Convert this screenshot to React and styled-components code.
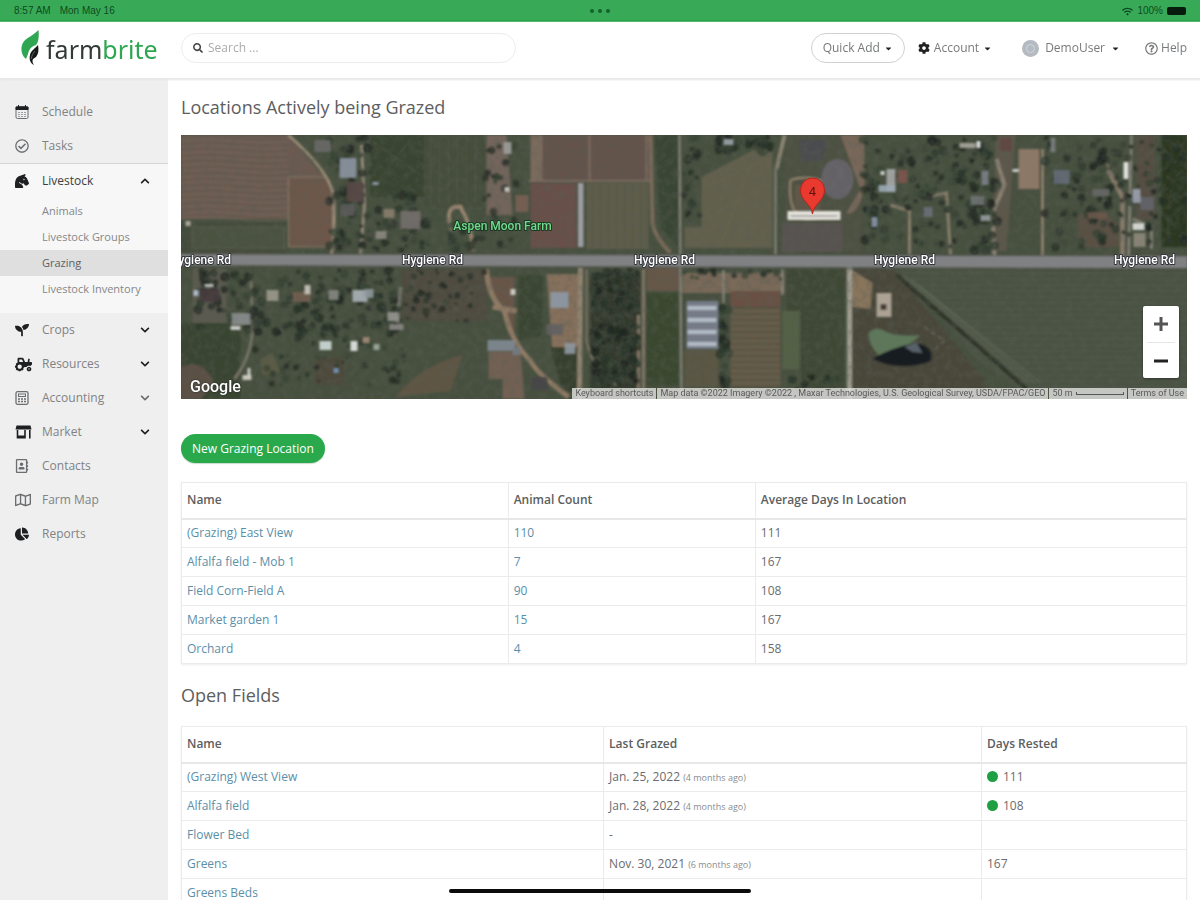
import React from "react";
import styled, { createGlobalStyle, css } from "styled-components";
import {
  FaCaretDown, FaChartPie, FaChevronDown, FaChevronUp, FaCog, FaHorseHead, FaRegAddressBook,
  FaRegCheckCircle, FaRegMap, FaRegQuestionCircle, FaSearch, FaSeedling,
  FaTractor, FaWifi,
} from "react-icons/fa";

const GlobalStyle = createGlobalStyle`
  *, *::before, *::after { box-sizing: border-box; }
  body {
    margin: 0;
    background: #fff;
    color: #6a6c6f;
    font-family: "Open Sans", "Liberation Sans", sans-serif;
    font-size: 12px;
    line-height: 18px;
  }
  button, input { font: inherit; color: inherit; }
  a { text-decoration: none; color: inherit; }
`;

const Page = styled.div`
  display: flex;
  flex-direction: column;
  height: 100vh;
  overflow: hidden;
`;

/* Device status bar */
const StatusBar = styled.div`
  display: grid;
  grid-template-columns: 1fr auto 1fr;
  align-items: center;
  flex: none;
  height: 22px;
  padding: 0 14px;
  background: #38aa57;
  border-bottom: 2px solid #16a03a;
  color: #0d4a20;
  font-family: "Liberation Sans", sans-serif;
  font-size: 10px;
`;
const StatusGroup = styled.div`
  display: flex;
  align-items: center;
  gap: ${(p) => (p.$end ? "4px" : "9px")};
  padding-top: 2px;
  justify-content: ${(p) => (p.$end ? "flex-end" : "flex-start")};
`;
const Multitask = styled.div`
  display: flex;
  gap: 4px;
  padding-top: 2px;
  i { width: 4px; height: 4px; border-radius: 50%; background: #11632b; }
`;
const Battery = styled.span`
  width: 19px;
  height: 8px;
  border-radius: 2px;
  background: #071c0d;
`;

/* Header */
const Header = styled.header`
  display: flex;
  align-items: center;
  flex: none;
  height: 56px;
  padding: 0 13px 4px 21px;
  background: #fff;
  box-shadow: 0 1px 2px 1px #e6e7e8;
  z-index: 1;
`;
const Brand = styled.a`
  display: flex;
  align-items: center;
  gap: 6px;
  width: 160px;
  flex: none;
  font-family: "Noto Sans", "Open Sans", sans-serif;
  font-size: 25px;
  line-height: 34px;
  color: #333a3a;
  span { padding-top: 2px; }
  span span { color: #2fa651; }
  svg { flex: none; }
`;
const SearchBox = styled.label`
  display: flex;
  align-items: center;
  gap: 5px;
  flex: 0 1 335px;
  height: 30px;
  padding: 0 11px;
  border: 1px solid #ececee;
  border-radius: 15px;
  color: #444;
  input {
    flex: 1;
    min-width: 0;
    border: 0;
    padding: 0;
    outline: 0;
    background: none;
  }
  input::placeholder { color: #a9abad; opacity: 1; }
`;
const UserNav = styled.nav`
  display: flex;
  align-items: center;
  margin-left: auto;
  white-space: nowrap;
`;
const MenuButton = styled.button`
  display: flex;
  align-items: center;
  gap: ${(p) => (p.$avatar ? "6px" : "4px")};
  height: 30px;
  padding: 0 ${(p) => (p.$pill ? "11px" : "0")};
  margin-right: ${(p) => p.$after}px;
  border: ${(p) => (p.$pill ? "1px solid #cfd1d3" : "0")};
  border-radius: 15px;
  background: none;
  color: #777a7c;
  svg { color: #222; }
`;
const HelpLink = styled.a`
  display: flex;
  align-items: center;
  gap: 3px;
  color: #777a7c;
`;
const Avatar = styled.span`
  display: grid;
  place-items: center;
  width: 17px;
  height: 17px;
  border-radius: 50%;
  background: #b3bac1;
  &::after {
    content: "";
    width: 9px;
    height: 9px;
    border: 1px solid #d3d8dc;
    border-radius: 50%;
  }
`;

/* Layout */
const Body = styled.div`
  display: flex;
  flex: 1;
  min-height: 0;
`;
const Sidebar = styled.nav`
  flex: none;
  width: 168px;
  padding-top: 17px;
  background: #efefef;
  overflow: hidden;
`;
const NavItem = styled.a`
  display: grid;
  grid-template-columns: 27px 1fr 12px;
  align-items: center;
  height: 34px;
  padding: 0 16px 0 15px;
  color: ${(p) => (p.$open ? "#3c3e40" : "#808284")};
  > svg { color: ${(p) => (p.$soft ? "#6b6d6f" : "#1d1f21")}; }
`;
const OpenGroup = styled.div`
  padding-bottom: 11px;
  background: #f7f7f7;
  border-top: 1px solid #d5d6d7;
`;
const SubItem = styled.a`
  display: block;
  height: 26px;
  padding-left: 42px;
  font-size: 11px;
  line-height: 26px;
  color: ${(p) => (p.$active ? "#5c5e60" : "#858789")};
  background: ${(p) => (p.$active ? "#dfdfdf" : "none")};
`;
const Main = styled.main`
  flex: 1;
  min-width: 0;
  padding: 16px 13px 0;
  overflow-y: auto;
  scrollbar-width: none;
`;
const Title = styled.h2`
  margin: 0 0 ${(p) => p.$gap}px;
  font-size: 18px;
  line-height: 26px;
  font-weight: 400;
  color: #5c5e60;
`;

/* Map */
const MapFrame = styled.section`
  position: relative;
  height: 264px;
  overflow: hidden;
  background: #434a3b;
  > svg { display: block; width: 100%; height: 100%; }
`;
const MapBrand = styled.span`
  position: absolute;
  left: 9px;
  bottom: 2px;
  color: #fff;
  font-family: Roboto, sans-serif;
  font-weight: 500;
  font-size: 16px;
  line-height: 20px;
  text-shadow: 0 0 2px #222;
`;
const ZoomControl = styled.div`
  position: absolute;
  right: 8px;
  bottom: 21px;
  display: flex;
  flex-direction: column;
  width: 36px;
  padding: 0 4px;
  border-radius: 2px;
  background: #fff;
  box-shadow: 0 1px 3px rgba(0, 0, 0, 0.35);
`;
const ZoomButton = styled.button`
  display: grid;
  place-items: center;
  height: 36px;
  padding: 0;
  border: 0;
  background: none;
  color: #555;
  & + & { border-top: 1px solid #e6e6e6; color: #222; }
`;
const MapCredits = styled.div`
  position: absolute;
  right: 0;
  bottom: 0;
  display: flex;
  gap: 1px;
  font-family: Roboto, sans-serif;
  font-size: 9px;
  line-height: 11px;
  color: #5a5a5a;
  white-space: nowrap;
  > * {
    display: flex;
    align-items: center;
    gap: 3px;
    padding: 0 3px;
    background: rgba(225, 225, 222, 0.82);
  }
`;
const ScaleBar = styled.i`
  width: 48px;
  height: 3px;
  border: 1px solid #555;
  border-top: 0;
`;

const PrimaryButton = styled.button`
  display: block;
  height: 29px;
  margin: 35px 0 19px;
  padding: 0 11px;
  border: 0;
  border-radius: 15px;
  background: #2aa84c;
  color: #fff;
  font-weight: 500;
  box-shadow: 0 1px 1px #c9dccd;
`;

/* Data tables */
const cell = css`
  padding: 0 5px;
  border: 1px solid #ebebec;
  text-align: left;
  height: 29px;
`;
const Table = styled.table`
  width: 100%;
  table-layout: fixed;
  border-collapse: collapse;
  margin-bottom: ${(p) => p.$after || 0}px;
  box-shadow: 0 1px 2px #ececec;
  th {
    ${cell}
    height: 36px;
    border-bottom: 2px solid #e6e7e8;
    font-weight: 600;
    color: #5c5e60;
  }
  td { ${cell} }
  a { color: #5a8fa9; }
  small { font-size: 9px; color: #8a8c8e; }
`;
const Column = styled.col`
  width: ${(p) => p.$width};
`;
const Dot = styled.span`
  display: inline-block;
  width: 11px;
  height: 11px;
  margin-right: 5px;
  border-radius: 50%;
  background: #1d9f42;
  vertical-align: -1px;
`;
const HomeIndicator = styled.div`
  position: fixed;
  left: 50%;
  bottom: 7px;
  width: 302px;
  height: 4px;
  border-radius: 2px;
  background: #0b0b0b;
  transform: translateX(-50%);
`;

const LeafLogo = () => (
  <svg width="19" height="36" viewBox="0 0 19 36" aria-hidden="true">
    <path d="M17.500 0C18 5 18 12 15 15C11 16 8 19 7 24L5 29C1 26 -.5 20 1 15C3 8 11 7 17.500 0Z" fill="#2fa651" />
    <path d="M17 15C18 20 17.500 24 15 27L12 29C11 31 11.500 33 13 35C9 33 8 29 9 25C10 20 14 19 17 15Z" fill="#141817" />
    <path d="M10 29Q11 24 14 21" stroke="#7d8482" strokeWidth=".7" fill="none" />
  </svg>
);

/* Sidebar icons */
const CalendarIcon = ({ size }) => (
  <svg width={size} height={size} viewBox="0 0 14 14" fill="none" stroke="currentColor" aria-hidden="true">
    <rect x="1" y="1.500" width="12" height="12" rx="1.500" />
    <path d="M1 2H13V4.500H1Z" fill="#1d1f21" stroke="#1d1f21" />
    <path d="M3.500 0V2M10.500 0V2" stroke="#1d1f21" />
    <path d="M3 7.500H11M3 9.500H11M3 11.500H11" strokeDasharray="2 1" opacity=".6" />
  </svg>
);
const CalculatorIcon = ({ size }) => (
  <svg width={size} height={size} viewBox="0 0 14 14" fill="none" stroke="currentColor" aria-hidden="true">
    <rect x="1" y=".7" width="12" height="12.600" rx="1.500" strokeWidth="1.300" />
    <rect x="3.500" y="3" width="7" height="2.500" />
    <path d="M3 8H11M3 10.500H11" strokeWidth="1.600" strokeDasharray="2 1" />
  </svg>
);
const StallIcon = ({ size }) => (
  <svg width={size + 3} height={size} viewBox="0 0 17 14" aria-hidden="true">
    <path d="M1.500 .5H15.500L16.500 4.500H.5Z" fill="currentColor" />
    <path d="M2.500 5V12.800H10V5M14.800 5V13.500" fill="none" stroke="currentColor" strokeWidth="1.600" />
    <path d="M2.500 11.500H10" stroke="currentColor" strokeWidth="2" />
  </svg>
);

/* Deterministic scatter so that the tree cover is the same on each render */
function scatter(seed, count, x, y, w, h, min, max) {
  let s = seed;
  const next = () => {
    s = (s * 16807) % 2147483647;
    return s / 2147483647;
  };
  next();
  return Array.from({ length: count }, () => ({
    x: x + next() * w,
    y: y + next() * h,
    r: min + next() * (max - min),
    tone: Math.floor(next() * 4),
  }));
}
const TREE_TONES = ["#232e24", "#2b3a2b", "#344432", "#1f2722"];
const TREES = [
  ...scatter(11, 55, 148, 2, 42, 114, 2, 5),
  ...scatter(17, 36, 190, 60, 60, 56, 2, 5),
  ...scatter(23, 14, 270, 88, 40, 28, 2, 5),
  ...scatter(29, 22, 304, 2, 32, 112, 2, 4),
  ...scatter(31, 18, 502, 2, 18, 88, 2, 5),
  ...scatter(37, 34, 530, 0, 60, 16, 2, 6),
  ...scatter(41, 150, 15, 134, 205, 64, 2, 5),
  ...scatter(43, 46, 220, 134, 86, 54, 1, 4),
  ...scatter(47, 60, 74, 190, 150, 62, 1, 4),
  ...scatter(53, 60, 408, 134, 50, 66, 2, 4),
  ...scatter(59, 75, 408, 192, 50, 58, 2, 5),
  ...scatter(61, 30, 538, 168, 10, 84, 3, 5),
  ...scatter(67, 22, 502, 132, 100, 12, 2, 4),
  ...scatter(71, 120, 682, 0, 134, 112, 2, 5),
  ...scatter(73, 36, 790, 0, 28, 116, 2, 5),
  ...scatter(79, 75, 864, 0, 78, 114, 2, 5),
  ...scatter(83, 28, 943, 0, 30, 110, 2, 4),
  ...scatter(89, 30, 972, 0, 35, 108, 2, 4),
  ...scatter(97, 12, 610, 240, 60, 16, 2, 4),
];
const ROOFS = [
  [159, 23, 17, 20, "#8b95a4"], [166, 47, 17, 20, "#5b4946"], [134, 5, 16, 12, "#6a6a69"], [160, 69, 14, 12, "#5d5b5c"],
  [220, 76, 20, 18, "#75706d"], [203, 74, 11, 9, "#8a7d69"], [195, 96, 11, 8, "#8d887e"], [192, 47, 6, 3, "#93a4bd"],
  [19, 154, 20, 13, "#493b3e"], [13, 155, 5, 6, "#b8c6dd"], [24, 149, 9, 3, "#c9cdca"], [51, 178, 19, 12, "#8a8d8d"],
  [50, 191, 10, 4, "#dadada"], [86, 155, 12, 11, "#9b9989"], [112, 157, 18, 10, "#77604d"], [124, 150, 6, 9, "#cdc7bb"],
  [172, 155, 15, 12, "#a8b3b8"], [184, 154, 9, 9, "#8d989f"], [148, 155, 10, 10, "#85877f"], [207, 177, 11, 9, "#95958f"],
  [209, 189, 14, 6, "#8b8784"], [139, 206, 12, 9, "#cedbd8"], [170, 206, 7, 10, "#e3e8e5"], [193, 209, 6, 6, "#9cab9e"],
  [182, 202, 7, 6, "#a58b71"], [62, 240, 9, 5, "#d6d4c9"], [67, 233, 3, 8, "#dcdad0"], [153, 233, 5, 5, "#7196c5"],
  [307, 205, 28, 11, "#7f8996"], [330, 154, 5, 6, "#d8d8d5"], [370, 157, 18, 16, "#8b9aa8"], [366, 189, 16, 11, "#5f5f62"],
  [384, 208, 11, 11, "#8e98a2"], [332, 212, 8, 8, "#747b83"], [351, 242, 16, 13, "#494549"], [335, 60, 13, 17, "#7b5e50"],
  [324, 52, 5, 5, "#d2d0ca"], [323, 7, 8, 12, "#9c9f9b"], [706, 34, 9, 23, "#a8aaa8"], [717, 35, 10, 13, "#82534a"],
  [698, 50, 17, 7, "#9aaab8"], [691, 82, 6, 10, "#8593ab"], [743, 72, 9, 10, "#6b707c"], [779, 8, 16, 5, "#a8a59a"],
  [796, 6, 4, 7, "#f0f0ed"], [801, 36, 7, 14, "#7b8189"], [820, 3, 11, 13, "#644640"], [790, 61, 14, 9, "#6f7374"],
  [800, 80, 10, 6, "#969a9c"], [832, 34, 6, 3, "#d9dfdb"], [870, 3, 5, 14, "#7e8383"], [873, 35, 16, 14, "#646c79"],
  [912, 54, 17, 7, "#666866"], [943, 27, 5, 17, "#efefec"], [952, 54, 8, 14, "#9aa2b4"], [960, 62, 13, 13, "#62656d"],
  [952, 88, 12, 7, "#e0e1df"], [953, 98, 12, 14, "#8f8a79"], [907, 77, 20, 7, "#6b5848"], [5, 86, 5, 5, "#b8b2a4"],
  [543, 4, 10, 6, "#9aa4a8"], [700, 36, 4, 4, "#dfe3e0"],
];
const ROAD_LABELS = [20, 252, 484, 724, 964];

const Lines = ({ items, color, width = 1, opacity = 1 }) => (
  <g stroke={color} strokeWidth={width} opacity={opacity} fill="none">
    {items.map((d) => <path key={d} d={d} />)}
  </g>
);
const range = (n, f) => Array.from({ length: n }, (_, i) => f(i));

function SatelliteMap() {
  return (
    <svg viewBox="0 0 1007 264" preserveAspectRatio="xMidYMid slice" role="img" aria-label="Satellite map of Hygiene Rd">
      <defs>
        <filter id="ground" x="0" y="0" width="100%" height="100%">
          <feTurbulence type="fractalNoise" baseFrequency=".14" numOctaves="4" seed="5" result="noise" />
          <feColorMatrix in="noise" type="matrix" values="0 0 0 0 .1  0 0 0 0 .11  0 0 0 0 .09  0 0 0 1.600 -.62" />
        </filter>
        <filter id="soft" x="-2%" y="-2%" width="104%" height="104%">
          <feGaussianBlur stdDeviation=".8" />
          <feColorMatrix type="saturate" values=".85" />
        </filter>
        <clipPath id="crop-field"><path d="M718 134L1007 137V264H852L794 222Z" /></clipPath>
      </defs>
      <rect width="1007" height="264" fill="#47503f" />
      <g filter="url(#soft)">
        {/* north side fields */}
        <path d="M0 0H108L146 45V84H0Z" fill="#6d5a4e" />
        <Lines items={range(14, (i) => `M0 ${6 + i * 6}q27 -3 54 0t54 1`)} color="#85705f" opacity=".55" />
        <path d="M0 88H105V117H0Z" fill="#434c39" />
        <path d="M12 92H104V113H12Z" fill="#48533c" stroke="#5c604b" />
        <path d="M108 42H146L152 56V112H108Z" fill="#6f5746" stroke="#8d7a65" />
        <path d="M190 0H244V62H190Z" fill="#38442f" />
        <path d="M192 6L240 40M232 2L200 42" stroke="#4d573f" />
        <path d="M244 0H304V72H244Z" fill="#444d39" />
        <Lines items={range(6, (i) => `M${250 + i * 9} 2V68`)} color="#566049" opacity=".6" />
        <path d="M306 0H326L332 80H306Z" fill="#74655a" />
        <path d="M350 0H470V46H350Z" fill="#65524a" />
        <path d="M350 0H362V46H350Z" fill="#7c6a5a" />
        <Lines items={["M409 0V45", "M348 46H470", "M466 0V46"]} color="#806c5d" width="2" />
        <path d="M350 48H396V113H350Z" fill="#6b5046" />
        <path d="M406 48H468V114H406Z" fill="#5e5d47" />
        <Lines items={range(7, (i) => `M${412 + i * 8} 50V112`)} color="#4c573c" opacity=".6" />
        <path d="M474 0H498V112L480 92Z" fill="#394631" />
        <path d="M470 0L472 88Q474 102 490 118" stroke="#7e6b55" strokeWidth="4" fill="none" />
        <path d="M521 42L575 14H592V113H504V92H521Z" fill="#636049" />
        <path d="M524 52L588 24M524 84L588 50M540 110L570 30" stroke="#70694f" opacity=".7" />
        <path d="M604 0H682V116H604Z" fill="#4d5141" />
        <path d="M610 45Q606 92 640 82M610 45Q626 40 642 46" stroke="#998669" strokeWidth="2" fill="none" />
        <path d="M614 50H640V76H614Z" fill="#625744" />
        <ellipse cx="657" cy="44" rx="16" ry="20" fill="#66646a" />
        <path d="M618 5H646L642 26H622Z" fill="#4c4c50" />
        <path d="M660 0H684V54Q676 82 666 78L680 54Z" fill="#7b6756" />
        <path d="M601 88H662V117H601Z" fill="#59534f" />
        <path d="M815 0H835L826 116H812Z" fill="#5d5646" />
        <path d="M898 80Q920 70 938 90V112H898Z" fill="#5c5040" />
        <path d="M956 0H974V84H956Z" fill="#574e40" />
        <path d="M981 0H1007V112H981Z" fill="#29391f" />

        {/* south side fields */}
        <path d="M12 134H46V198H12Z" fill="#5b5a4d" />
        <path d="M0 188H60V264H0Z" fill="#37442f" />
        <path d="M0 232Q24 222 34 250L20 264H0Z" fill="#5d4f42" />
        <path d="M222 134H306V186H222Z" fill="#504c3e" />
        <path d="M134 222H164V250H134Z" fill="#4e4a39" />
        <path d="M80 224L92 218L100 238L82 240Z" fill="#5b5b40" />
        <path d="M215 262Q240 230 282 220L270 256Z" fill="#61543f" />
        <path d="M338 140H362V200L338 206Z" fill="#37472f" />
        <path d="M366 139H398V222L372 218Z" fill="#897056" />
        <path d="M306 142H334V198L312 164Z" fill="#6a5545" />
        <path d="M308 216H340L344 264H322V244H308Z" fill="#75604f" />
        <path d="M370 212H398V256H382Z" fill="#34412b" />
        <path d="M410 138H460V254H410Z" fill="#303a2a" />
        <path d="M466 132H500V156H466Z" fill="#685644" />
        <path d="M466 158H498V250H466Z" fill="#38482c" />
        <path d="M502 138H604V158H502Z" fill="#7b6955" />
        <path d="M504 215H538V252H504Z" fill="#5b573f" />
        <path d="M550 156H600V172H550Z" fill="#6d4f40" />
        <path d="M550 173H600V252H550Z" fill="#625641" />
        <Lines items={range(13, (i) => `M550 ${176 + i * 6}h50`)} color="#7e725b" opacity=".6" />
        <path d="M602 176H619V234H602Z" fill="#52623f" />
        <path d="M606 134H664V256H620V176H606Z" fill="#3e4a31" />
        <path d="M664 134H712L804 244V264H674Z" fill="#484737" />
        <path d="M670 134L692 148L690 174L672 172Z" fill="#8a7456" />
        <g clipPath="url(#crop-field)">
          <rect x="700" y="130" width="310" height="134" fill="#485240" />
          <Lines items={range(24, (i) => `M700 ${138 + i * 6}H1007`)} color="#59634e" opacity=".7" />
        </g>
        <path d="M716 140L846 254" stroke="#2e3427" strokeWidth="4" />
        <Lines items={["M722 140L848 248", "M730 144L854 248", "M738 150L860 248"]} color="#65705a" />

        {/* lanes and drives */}
        <path d="M108 0Q146 34 152 56Q156 80 151 120" stroke="#9c8b72" strokeWidth="3" fill="none" />
        <path d="M181 10L184 70L180 120" stroke="#958977" strokeWidth="3" fill="none" />
        <path d="M272 98Q262 70 280 72Q292 92 292 116" stroke="#9a846a" strokeWidth="4" fill="none" />
        <path d="M70 134L72 190Q72 220 54 244" stroke="#777464" strokeWidth="3" fill="none" />
        <path d="M220 152L216 196" stroke="#7c796f" strokeWidth="3" fill="none" />
        <path d="M306 134Q308 164 324 176Q330 206 350 226Q356 238 388 262" stroke="#937a5f" strokeWidth="5" fill="none" />
        <path d="M312 172L336 176" stroke="#937a5f" strokeWidth="5" />
        <path d="M400 132L399 264" stroke="#93846d" strokeWidth="5" />
        <path d="M406 134V206Q412 236 436 250" stroke="#857762" strokeWidth="2" fill="none" />
        <path d="M463 134V254M458 180V254" stroke="#857762" strokeWidth="3" />
        <Lines items={["M499 0L501 264", "M595 34V120", "M543 132V168", "M602 134V160"]} color="#8d8b7f" width="2" />
        <path d="M604 0L596 34" stroke="#8d8470" strokeWidth="4" />
        <path d="M669 130V264" stroke="#a09c8e" strokeWidth="5" />
        <path d="M729 120V76L710 70M770 120L766 58L744 62M862 122V14" stroke="#8d8069" strokeWidth="3" fill="none" />
        <path d="M814 122L812 78L824 50L816 24" stroke="#8b8170" strokeWidth="4" fill="none" />
        <path d="M942 122V62L922 24" stroke="#877966" strokeWidth="5" fill="none" />
        <path d="M951 0L948 122M971 114V92L952 84" stroke="#858073" strokeWidth="3" fill="none" />
        {TREES.map((t, i) => <circle key={i} cx={t.x} cy={t.y} r={t.r} fill={TREE_TONES[t.tone]} opacity=".75" />)}
      </g>
      <rect width="1007" height="264" filter="url(#ground)" opacity=".5" />

      {/* buildings, ponds and the main road */}
      <g filter="url(#soft)">
        <path d="M838 14H859V54H838Z" fill="#8f7762" />
        <path d="M397 48H403V112H397Z" fill="#9c9da4" />
        <path d="M506 166H538V214H506Z" fill="#747c89" />
        {range(4, (i) => <path key={i} d={`M507 ${173 + i * 12}H536`} stroke="#b0bbc8" strokeWidth="4" />)}
        <path d="M696 158H711V182H696Z" fill="#aca290" />
        <path d="M700 169H706V175H700Z" fill="#4a3a34" />
        <path d="M688 198Q696 190 706 197Q718 202 740 200Q730 212 712 214L698 220Q688 210 688 198Z" fill="#5a7856" />
        <path d="M692 224Q712 212 736 208Q754 212 750 226Q730 234 706 229Z" fill="#151c22" />
        <path d="M724 212L736 207L742 218L732 217Z" fill="#56606a" />
        <path d="M744 192L764 206L752 216" stroke="#818178" fill="none" strokeDasharray="5 3" />
        {ROOFS.map(([x, y, w, h, fill]) => <rect key={`${x}-${y}`} x={x} y={y} width={w} height={h} fill={fill} opacity=".9" />)}
        <path d="M0 119L1007 121V133L0 130Z" fill="#808183" />
        <path d="M0 119L1007 121M0 131L1007 134" stroke="#55584f" />
        <rect x="607" y="76" width="53" height="9" fill="#e6e3dc" />
        <path d="M610 81H657" stroke="#a9a7a2" strokeWidth="2" />
      </g>

      <g fontFamily="Roboto, sans-serif" fontSize="12" fontWeight="500" textAnchor="middle" paintOrder="stroke" strokeLinejoin="round">
        {ROAD_LABELS.map((x) => (
          <text key={x} x={x} y="129" fill="#fff" stroke="#33363a" strokeWidth="2">Hygiene Rd</text>
        ))}
        <text x="322" y="95" fill="#6fdc8c" stroke="#1d3524" strokeWidth="2">Aspen Moon Farm</text>
      </g>
      <path d="M632 79C631 69 620 66 620 55A12 12 0 0 1 644 55C644 66 633 69 632 79Z" fill="#ea3a2f" stroke="#b3261e" strokeWidth="1" />
      <text x="632" y="61" fontFamily="Roboto, sans-serif" fontSize="13" textAnchor="middle" fill="#5d120d">4</text>
    </svg>
  );
}

const GrazedMap = () => (
  <MapFrame>
    <SatelliteMap />
    <MapBrand>Google</MapBrand>
    <ZoomControl>
      <ZoomButton aria-label="Zoom in">
        <svg width="16" height="16" aria-hidden="true"><path d="M8 1V15M1 8H15" stroke="currentColor" strokeWidth="3" /></svg>
      </ZoomButton>
      <ZoomButton aria-label="Zoom out">
        <svg width="16" height="16" aria-hidden="true"><path d="M1 8H15" stroke="currentColor" strokeWidth="3" /></svg>
      </ZoomButton>
    </ZoomControl>
    <MapCredits>
      <span>Keyboard shortcuts</span>
      <span>Map data ©2022 Imagery ©2022 , Maxar Technologies, U.S. Geological Survey, USDA/FPAC/GEO</span>
      <span>50 m <ScaleBar /></span>
      <a href="#terms">Terms of Use</a>
    </MapCredits>
  </MapFrame>
);

const GRAZED = [
  ["(Grazing) East View", 110, 111],
  ["Alfalfa field - Mob 1", 7, 167],
  ["Field Corn-Field A", 90, 108],
  ["Market garden 1", 15, 167],
  ["Orchard", 4, 158],
];
const OPEN_FIELDS = [
  { name: "(Grazing) West View", last: "Jan. 25, 2022", ago: "(4 months ago)", rested: 111, ready: true },
  { name: "Alfalfa field", last: "Jan. 28, 2022", ago: "(4 months ago)", rested: 108, ready: true },
  { name: "Flower Bed", last: "-" },
  { name: "Greens", last: "Nov. 30, 2021", ago: "(6 months ago)", rested: 167 },
  { name: "Greens Beds" },
];
const TOP_NAV = [
  { label: "Schedule", icon: CalendarIcon, soft: true },
  { label: "Tasks", icon: FaRegCheckCircle, soft: true },
];
const LIVESTOCK = ["Animals", "Livestock Groups", "Grazing", "Livestock Inventory"];
const LOWER_NAV = [
  { label: "Crops", icon: FaSeedling, more: true },
  { label: "Resources", icon: FaTractor, more: true, size: 17 },
  { label: "Accounting", icon: CalculatorIcon, more: true, soft: true },
  { label: "Market", icon: StallIcon, more: true },
  { label: "Contacts", icon: FaRegAddressBook, soft: true },
  { label: "Farm Map", icon: FaRegMap, soft: true, size: 16 },
  { label: "Reports", icon: FaChartPie },
];

const NavRow = ({ item: { label, icon: Icon, more, soft, size = 14 } }) => (
  <NavItem href="#nav" $soft={soft}>
    <Icon size={size} />
    <span>{label}</span>
    {more && <FaChevronDown size={10} />}
  </NavItem>
);

export default function App() {
  return (
    <Page>
      <GlobalStyle />
      <StatusBar>
        <StatusGroup><span>8:57 AM</span><span>Mon May 16</span></StatusGroup>
        <Multitask><i /><i /><i /></Multitask>
        <StatusGroup $end><FaWifi size={11} /><span>100%</span><Battery /></StatusGroup>
      </StatusBar>
      <Header>
        <Brand href="#home"><LeafLogo /><span>farm<span>brite</span></span></Brand>
        <SearchBox>
          <FaSearch size={10} aria-hidden="true" />
          <input type="search" placeholder="Search ..." aria-label="Search" />
        </SearchBox>
        <UserNav>
          <MenuButton $pill $after={13}>Quick Add <FaCaretDown size={9} /></MenuButton>
          <MenuButton $after={30}><FaCog size={12} />Account <FaCaretDown size={9} /></MenuButton>
          <MenuButton $avatar $after={25}><Avatar />DemoUser <FaCaretDown size={9} /></MenuButton>
          <HelpLink href="#help"><FaRegQuestionCircle size={13} />Help</HelpLink>
        </UserNav>
      </Header>
      <Body>
        <Sidebar aria-label="Main">
          {TOP_NAV.map((item) => <NavRow key={item.label} item={item} />)}
          <OpenGroup>
            <NavItem href="#livestock" $open>
              <FaHorseHead size={14} />
              <span>Livestock</span>
              <FaChevronUp size={10} />
            </NavItem>
            {LIVESTOCK.map((label) => (
              <SubItem key={label} href="#livestock" $active={label === "Grazing"}>{label}</SubItem>
            ))}
          </OpenGroup>
          {LOWER_NAV.map((item) => <NavRow key={item.label} item={item} />)}
        </Sidebar>
        <Main>
          <Title $gap={15}>Locations Actively being Grazed</Title>
          <GrazedMap />
          <PrimaryButton>New Grazing Location</PrimaryButton>
          <Table $after={18}>
            <colgroup><Column $width="32.5%" /><Column $width="24.6%" /><Column /></colgroup>
            <thead><tr><th>Name</th><th>Animal Count</th><th>Average Days In Location</th></tr></thead>
            <tbody>
              {GRAZED.map(([name, count, days]) => (
                <tr key={name}>
                  <td><a href="#field">{name}</a></td>
                  <td><a href="#animals">{count}</a></td>
                  <td>{days}</td>
                </tr>
              ))}
            </tbody>
          </Table>
          <Title $gap={18}>Open Fields</Title>
          <Table>
            <colgroup><Column $width="42%" /><Column $width="37.6%" /><Column /></colgroup>
            <thead><tr><th>Name</th><th>Last Grazed</th><th>Days Rested</th></tr></thead>
            <tbody>
              {OPEN_FIELDS.map((f) => (
                <tr key={f.name}>
                  <td><a href="#field">{f.name}</a></td>
                  <td>{f.last} {f.ago && <small>{f.ago}</small>}</td>
                  <td>{f.ready && <Dot />}{f.rested}</td>
                </tr>
              ))}
            </tbody>
          </Table>
        </Main>
      </Body>
      <HomeIndicator />
    </Page>
  );
}
